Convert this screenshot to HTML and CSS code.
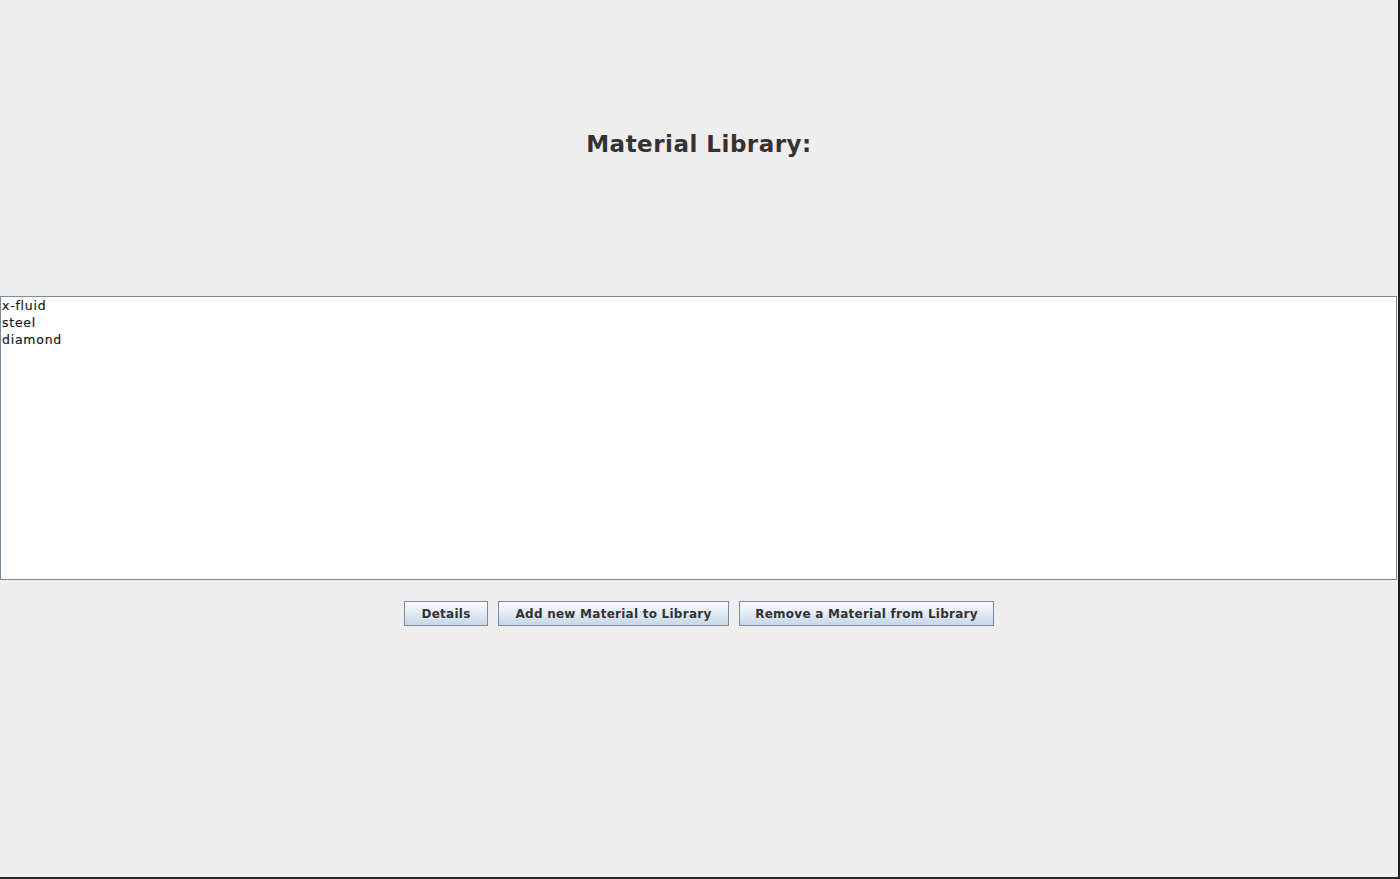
FILE: index.html
```html
<!DOCTYPE html>
<html>
<head>
<meta charset="utf-8">
<link rel="stylesheet" href="styles.css">
</head>
<body>
<div class="screen">
  <div class="window">
    <div class="content">
      <div class="title-area">
        <h1 class="title">Material Library:</h1>
      </div>
      <div class="list">
        <div class="item">x-fluid</div>
        <div class="item">steel</div>
        <div class="item">diamond</div>
      </div>
      <div class="buttons">
        <button class="btn btn-details">Details</button>
        <button class="btn btn-add">Add new Material to Library</button>
        <button class="btn btn-remove">Remove a Material from Library</button>
      </div>
    </div>
    <div class="edge-right"></div>
  </div>
  <div class="edge-bottom"></div>
</div>
</body>
</html>
```
FILE: styles.css
```css
html, body {
  margin: 0;
  padding: 0;
  background: #eeeeee;
  font-family: "DejaVu Sans", sans-serif;
}
.screen {
  width: 1400px;
  height: 879px;
  display: flex;
  flex-direction: column;
  overflow: hidden;
}
.window {
  display: flex;
  flex: 1;
}
.content {
  width: 1398px;
  display: flex;
  flex-direction: column;
  background: #eeeeee;
}
.edge-right {
  width: 2px;
  background: #1c2125;
}
.edge-bottom {
  height: 2px;
  background: #23282b;
}
.title-area {
  height: 296px;
  display: flex;
  justify-content: center;
}
.title {
  margin: 0;
  padding-top: 129px;
  font-size: 23px;
  line-height: 31px;
  font-weight: bold;
  color: #333333;
  letter-spacing: 0.5px;
}
.list {
  width: 1395px;
  height: 282px;
  background: #ffffff;
  border: 1px solid #7a8a99;
  box-sizing: content-box;
}
.item {
  height: 17px;
  line-height: 17px;
  font-size: 12.5px;
  padding-left: 1px;
  color: #1a1a1a;
  letter-spacing: 0.75px;
  -webkit-text-stroke: 0.2px #1a1a1a;
}
.buttons {
  display: flex;
  justify-content: center;
  gap: 10px;
  margin-top: 21px;
}
.btn {
  height: 25px;
  margin: 0;
  padding: 0;
  border: 1px solid #7a8a99;
  border-radius: 0;
  background: linear-gradient(to bottom, #fbfcfe 0%, #e4ecf5 45%, #c6d7e8 100%);
  font-family: "DejaVu Sans", sans-serif;
  font-size: 12px;
  font-weight: bold;
  color: #333333;
  letter-spacing: 0.25px;
}
.btn-details { width: 84px; }
.btn-add { width: 231px; }
.btn-remove { width: 255px; }
```
